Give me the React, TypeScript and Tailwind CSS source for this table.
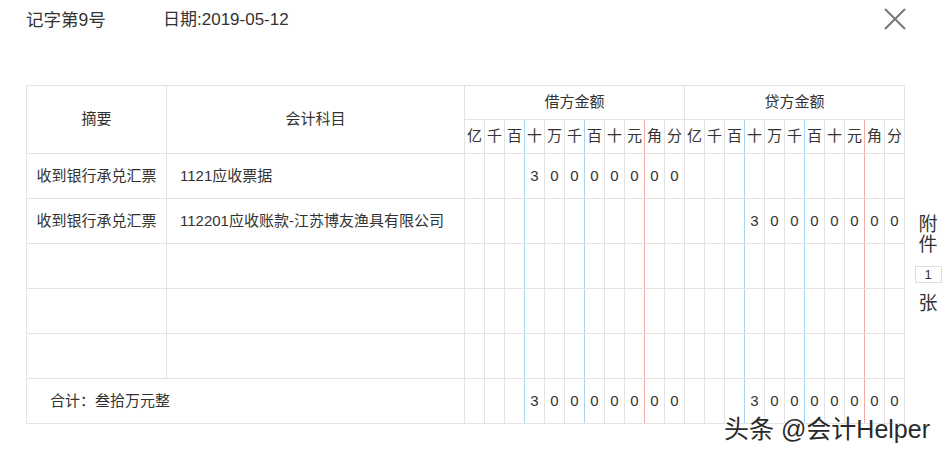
import React from "react";

const units = ["亿", "千", "百", "十", "万", "千", "百", "十", "元", "角", "分"];

type Row = { summary: string; account: string; debit: string; credit: string };

const rows: Row[] = [
  { summary: "收到银行承兑汇票", account: "1121应收票据", debit: "30000000", credit: "" },
  { summary: "收到银行承兑汇票", account: "112201应收账款-江苏博友渔具有限公司", debit: "", credit: "30000000" },
  { summary: "", account: "", debit: "", credit: "" },
  { summary: "", account: "", debit: "", credit: "" },
  { summary: "", account: "", debit: "", credit: "" },
];

// spread an amount string into the 11 digit slots, right aligned
const toCells = (v: string) => {
  const arr: string[] = Array(11).fill("");
  const chars = v.split("");
  chars.forEach((c, i) => {
    arr[11 - chars.length + i] = c;
  });
  return arr;
};

// blue group lines after 百(百万) and 千, red line after 元
const digitBorder = (i: number) => {
  if (i === 2 || i === 5) return "border border-y-[#e3e3e3] border-l-[#e3e3e3] border-r-[#a6d6f6]";
  if (i === 8) return "border border-y-[#e3e3e3] border-l-[#e3e3e3] border-r-[#f4abab]";
  return "border border-[#e3e3e3]";
};

const DigitCells: React.FC<{ value: string; header?: boolean }> = ({ value, header }) => (
  <>
    {(header ? units : toCells(value)).map((c, i) => (
      <td key={i} className={`${digitBorder(i)} p-0 text-center text-[15px]`}>
        {c}
      </td>
    ))}
  </>
);

export default function App() {
  return (
    <div className="relative w-[944px] h-[454px] overflow-hidden bg-white text-[#333] font-['Liberation_Sans','Noto_Sans_CJK_SC',sans-serif]">
      <div className="flex items-center h-[40px] pl-[26px] pr-[38px]">
        <span className="w-[137px] text-[17.5px]">记字第9号</span>
        <span className="text-[17px]">日期:2019-05-12</span>
        <button className="ml-auto -mt-[3px] w-[22px] h-[22px] text-[#777]">
          <svg viewBox="0 0 22 22" width="22" height="22" fill="none" stroke="currentColor" strokeWidth={2}>
            <path d="M1 1L21 21M21 1L1 21" />
          </svg>
        </button>
      </div>

      <div className="flex items-center mt-[45px] pl-[26px]">
        <table className="table-fixed border-collapse w-[879px] text-[15px]">
          <colgroup>
            <col className="w-[140px]" />
            <col className="w-[298px]" />
            {Array.from({ length: 22 }).map((_, i) => (
              <col key={i} className="w-[20px]" />
            ))}
          </colgroup>
          <thead>
            <tr className="h-[34px]">
              <th rowSpan={2} className="border border-[#e3e3e3] font-normal">摘要</th>
              <th rowSpan={2} className="border border-[#e3e3e3] font-normal">会计科目</th>
              <th colSpan={11} className="border border-[#e3e3e3] font-normal">借方金额</th>
              <th colSpan={11} className="border border-[#e3e3e3] font-normal">贷方金额</th>
            </tr>
            <tr className="h-[34px]">
              <DigitCells value="" header />
              <DigitCells value="" header />
            </tr>
          </thead>
          <tbody>
            {rows.map((r, idx) => (
              <tr key={idx} className="h-[45px]">
                <td className="border border-[#e3e3e3] text-center">{r.summary}</td>
                <td className="border border-[#e3e3e3] pl-[13px] whitespace-nowrap">{r.account}</td>
                <DigitCells value={r.debit} />
                <DigitCells value={r.credit} />
              </tr>
            ))}
            <tr className="h-[45px]">
              <td colSpan={2} className="border border-[#e3e3e3] pl-[23px]">合计：叁拾万元整</td>
              <DigitCells value="30000000" />
              <DigitCells value="30000000" />
            </tr>
          </tbody>
        </table>

        <div className="flex flex-col items-center w-[34px] ml-[7px] mt-[20px] text-[19px] leading-[20px]">
          <span>附</span>
          <span>件</span>
          <span className="mt-[11px] mb-[11px] w-[27px] h-[17px] border border-[#dddddd] text-[13px] leading-[15px] text-center">1</span>
          <span>张</span>
        </div>
      </div>

      <div className="absolute right-[14px] bottom-[11px] text-[25px] leading-[28px] text-[#2a2a2a] [text-shadow:0_0_1px_#fff]">
        头条 @会计Helper
      </div>
    </div>
  );
}
